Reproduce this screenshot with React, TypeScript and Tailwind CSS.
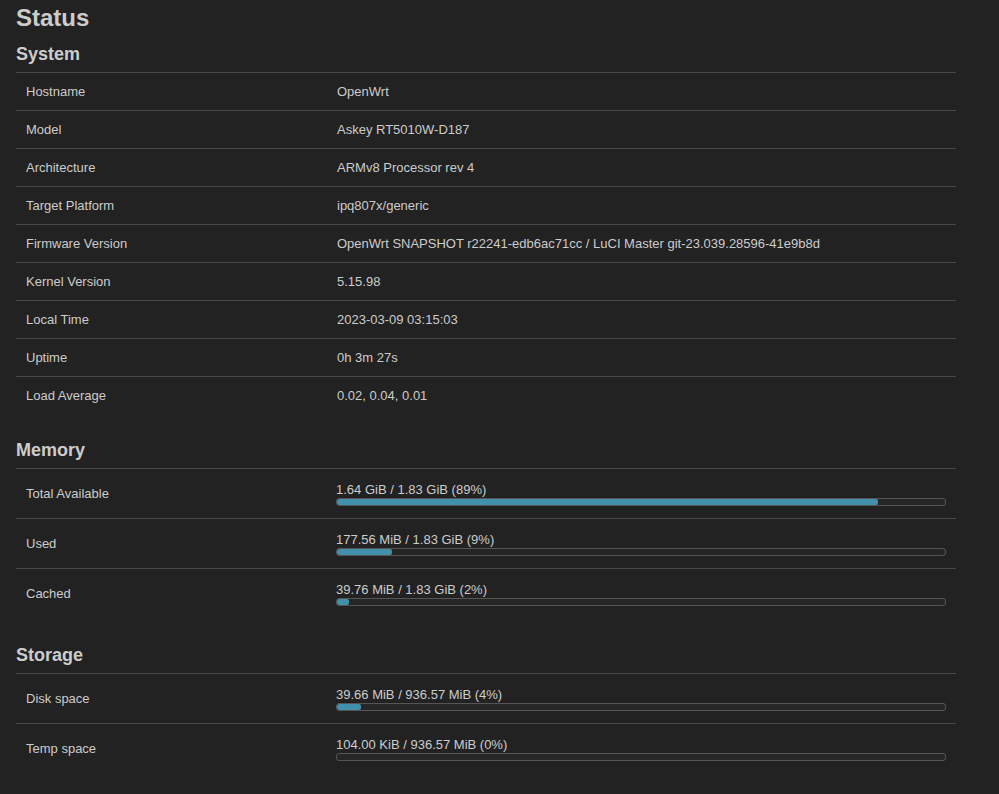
import React from "react";

const system: [string, string][] = [
  ["Hostname", "OpenWrt"],
  ["Model", "Askey RT5010W-D187"],
  ["Architecture", "ARMv8 Processor rev 4"],
  ["Target Platform", "ipq807x/generic"],
  ["Firmware Version", "OpenWrt SNAPSHOT r22241-edb6ac71cc / LuCI Master git-23.039.28596-41e9b8d"],
  ["Kernel Version", "5.15.98"],
  ["Local Time", "2023-03-09 03:15:03"],
  ["Uptime", "0h 3m 27s"],
  ["Load Average", "0.02, 0.04, 0.01"],
];

const memory: [string, string, number][] = [
  ["Total Available", "1.64 GiB / 1.83 GiB (89%)", 89],
  ["Used", "177.56 MiB / 1.83 GiB (9%)", 9],
  ["Cached", "39.76 MiB / 1.83 GiB (2%)", 2],
];

const storage: [string, string, number][] = [
  ["Disk space", "39.66 MiB / 936.57 MiB (4%)", 4],
  ["Temp space", "104.00 KiB / 936.57 MiB (0%)", 0],
];

function BarRow({ label, text, pct }: { label: string; text: string; pct: number }) {
  return (
    <div className="flex h-[50px] items-center border-t border-[#484848]">
      <div className="w-[310px] pl-[10px]">{label}</div>
      <div className="flex-1 pl-[10px] pr-[10px]">
        <div className="leading-[15px]">{text}</div>
        <div className="mt-[1px] h-[8px] rounded-[3px] border border-[#555] bg-[#262626] overflow-hidden">
          <div className="h-full bg-[#4190ac] rounded-[2px]" style={{ width: `${pct}%` }} />
        </div>
      </div>
    </div>
  );
}

export default function App() {
  return (
    <div
      className="min-h-[794px] bg-[#222222] px-4 text-[13px] text-[#cccccc]"
      style={{ fontFamily: '"Liberation Sans", Arial, sans-serif' }}
    >
      <div className="w-[940px]">
        <h1 className="h-[34px] text-[24px] font-bold leading-[36px] text-[#cccccc]">Status</h1>
        <h2 className="h-[38px] text-[18px] font-bold leading-[40px]">System</h2>
        <div>
          {system.map(([k, v]) => (
            <div key={k} className="flex h-[38px] items-center border-t border-[#484848]">
              <div className="w-[310px] pl-[10px]">{k}</div>
              <div className="flex-1 pl-[11px]">{v}</div>
            </div>
          ))}
        </div>
        <h2 className="mt-4 h-[38px] text-[18px] font-bold leading-[40px]">Memory</h2>
        <div>
          {memory.map(([k, t, p]) => (
            <BarRow key={k} label={k} text={t} pct={p} />
          ))}
        </div>
        <h2 className="mt-4 h-[39px] text-[18px] font-bold leading-[42px]">Storage</h2>
        <div>
          {storage.map(([k, t, p]) => (
            <BarRow key={k} label={k} text={t} pct={p} />
          ))}
        </div>
      </div>
    </div>
  );
}
